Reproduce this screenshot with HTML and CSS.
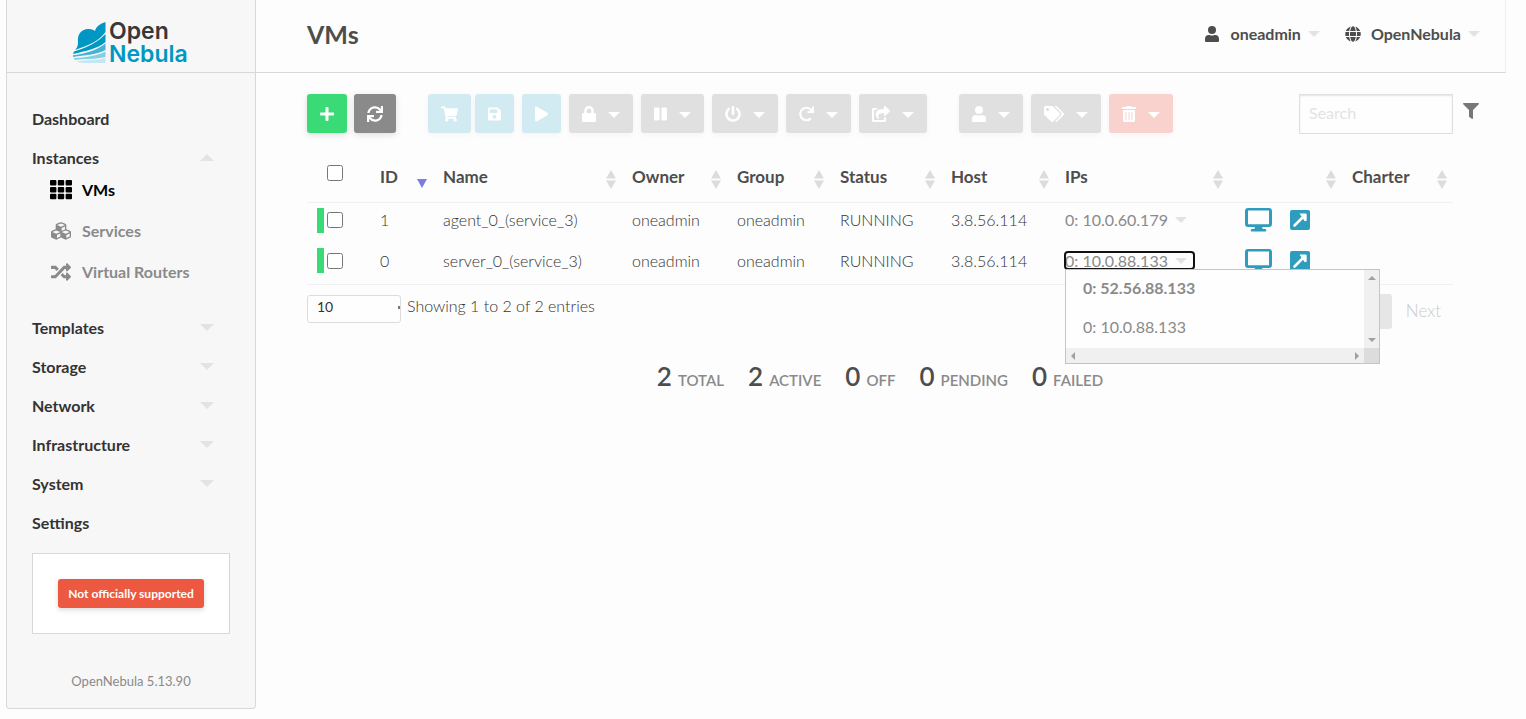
FILE: index.html
```html
<!DOCTYPE html>
<html lang="en">
<head>
<meta charset="utf-8">
<title>OpenNebula - VMs</title>
<link rel="stylesheet" href="styles.css">
</head>
<body>
<svg class="sprite" aria-hidden="true">
  <symbol id="plus" viewBox="0 0 448 512"><path d="M416 208H272V64c0-17.67-14.33-32-32-32h-32c-17.67 0-32 14.33-32 32v144H32c-17.67 0-32 14.33-32 32v32c0 17.67 14.33 32 32 32h144v144c0 17.67 14.33 32 32 32h32c17.67 0 32-14.33 32-32V304h144c17.67 0 32-14.33 32-32v-32c0-17.67-14.33-32-32-32z"/></symbol>
  <symbol id="sync" viewBox="0 0 512 512"><path d="M440.65 12.57l4 82.77A247.16 247.16 0 0 0 255.83 8C134.73 8 33.91 94.92 12.29 209.82A12 12 0 0 0 24.09 224h49.05a12 12 0 0 0 11.67-9.26 175.91 175.91 0 0 1 317-56.94l-101.46-4.86a12 12 0 0 0-12.57 12v47.41a12 12 0 0 0 12 12H500a12 12 0 0 0 12-12V12a12 12 0 0 0-12-12h-47.37a12 12 0 0 0-11.98 12.57zM255.83 432a175.61 175.61 0 0 1-146-77.8l101.8 4.87a12 12 0 0 0 12.57-12v-47.4a12 12 0 0 0-12-12H12a12 12 0 0 0-12 12V500a12 12 0 0 0 12 12h47.35a12 12 0 0 0 12-12.6l-4.15-82.57A247.17 247.17 0 0 0 255.83 504c121.11 0 221.93-86.92 243.55-201.82a12 12 0 0 0-11.8-14.18h-49.05a12 12 0 0 0-11.67 9.26A175.86 175.86 0 0 1 255.83 432z"/></symbol>
  <symbol id="cart" viewBox="0 0 576 512"><path d="M528.12 301.319l47.273-208C578.806 78.301 567.391 64 551.99 64H159.208l-9.166-44.81C147.758 8.021 137.93 0 126.529 0H24C10.745 0 0 10.745 0 24v16c0 13.255 10.745 24 24 24h69.883l70.248 343.435C147.325 417.1 136 435.222 136 456c0 30.928 25.072 56 56 56s56-25.072 56-56c0-15.674-6.447-29.835-16.824-40h209.647C430.447 426.165 424 440.326 424 456c0 30.928 25.072 56 56 56s56-25.072 56-56c0-22.172-12.888-41.332-31.579-50.405l5.517-24.276c3.413-15.018-8.002-29.319-23.403-29.319H218.117l-6.545-32h293.145c11.206 0 20.92-7.754 23.403-18.681z"/></symbol>
  <symbol id="save" viewBox="0 0 448 512"><path d="M433.941 129.941l-83.882-83.882A48 48 0 0 0 316.118 32H48C21.49 32 0 53.49 0 80v352c0 26.51 21.49 48 48 48h352c26.51 0 48-21.49 48-48V163.882a48 48 0 0 0-14.059-33.941zM224 416c-35.346 0-64-28.654-64-64 0-35.346 28.654-64 64-64s64 28.654 64 64c0 35.346-28.654 64-64 64zm96-304.52V212c0 6.627-5.373 12-12 12H76c-6.627 0-12-5.373-12-12V108c0-6.627 5.373-12 12-12h228.52c3.183 0 6.235 1.264 8.485 3.515l3.48 3.48A11.996 11.996 0 0 1 320 111.48z"/></symbol>
  <symbol id="play" viewBox="0 0 448 512"><path d="M424.4 214.7L72.4 6.6C43.8-10.3 0 6.1 0 47.9V464c0 37.5 40.7 60.1 72.4 41.3l352-208c31.4-18.5 31.5-64.1 0-82.6z"/></symbol>
  <symbol id="lock" viewBox="0 0 448 512"><path d="M400 224h-24v-72C376 68.2 307.8 0 224 0S72 68.2 72 152v72H48c-26.5 0-48 21.5-48 48v192c0 26.5 21.5 48 48 48h352c26.5 0 48-21.5 48-48V272c0-26.5-21.5-48-48-48zm-104 0H152v-72c0-39.7 32.3-72 72-72s72 32.3 72 72v72z"/></symbol>
  <symbol id="pause" viewBox="0 0 448 512"><path d="M144 479H48c-26.5 0-48-21.5-48-48V79c0-26.5 21.5-48 48-48h96c26.5 0 48 21.5 48 48v352c0 26.5-21.5 48-48 48zm304-48V79c0-26.5-21.5-48-48-48h-96c-26.5 0-48 21.5-48 48v352c0 26.5 21.5 48 48 48h96c26.5 0 48-21.5 48-48z"/></symbol>
  <symbol id="power" viewBox="0 0 512 512"><path d="M400 54.1c63 45 104 118.6 104 201.9 0 136.8-110.8 247.7-247.5 248C120 504.3 8.2 393 8 256.4 7.9 173.1 48.9 99.3 111.8 54.2c11.7-8.3 28-4.8 35 7.7L162.6 90c5.9 10.5 3.1 23.8-6.6 31-41.5 30.8-68 79.6-68 134.9-.1 92.3 74.5 168.1 168 168.1 91.6 0 168.6-74.2 168-169.1-.3-51.8-24.7-101.8-68.1-134-9.7-7.2-12.4-20.5-6.5-30.9l15.8-28.1c7-12.4 23.2-16.1 34.8-7.8zM296 264V24c0-13.3-10.7-24-24-24h-32c-13.3 0-24 10.7-24 24v240c0 13.3 10.7 24 24 24h32c13.3 0 24-10.7 24-24z"/></symbol>
  <symbol id="redo" viewBox="0 0 512 512"><path d="M500.33 0h-47.41a12 12 0 0 0-12 12.57l4 82.76A247.42 247.42 0 0 0 256 8C119.34 8 7.9 119.53 8 256.19 8.1 393.07 119.1 504 256 504a247.1 247.1 0 0 0 166.18-63.91 12 12 0 0 0 .48-17.43l-34-34a12 12 0 0 0-16.38-.55A176 176 0 1 1 402.1 157.8l-101.53-4.87a12 12 0 0 0-12.57 12v47.41a12 12 0 0 0 12 12h200.33a12 12 0 0 0 12-12V12a12 12 0 0 0-12-12z"/></symbol>
  <symbol id="share" viewBox="0 0 576 512"><path d="M568.482 177.448L424.479 313.433C409.3 327.768 384 317.14 384 295.985v-71.963c-144.575.97-205.566 35.113-164.775 171.353 4.483 14.973-12.846 26.567-25.006 17.33C155.252 383.105 120 326.488 120 269.339c0-143.937 117.599-172.5 264-173.312V24.012c0-21.174 25.317-31.768 40.479-17.448l144.003 135.988c10.02 9.463 10.028 25.425 0 34.896zM384 379.128V448H64V128h50.916a11.99 11.99 0 0 0 8.648-3.693c14.953-15.568 32.237-27.89 51.014-37.676C185.708 80.83 181.584 64 169.033 64H48C21.49 64 0 85.49 0 112v352c0 26.51 21.49 48 48 48h352c26.51 0 48-21.49 48-48v-88.806c0-8.288-8.197-14.066-16.011-11.302a71.83 71.83 0 0 1-34.189 3.377c-7.27-1.046-13.8 4.514-13.8 11.859z"/></symbol>
  <symbol id="user" viewBox="0 0 448 512"><circle cx="224" cy="128" r="128"/><path d="M0 408c0-66 50-118 112-118 35 0 65 16 112 16s77-16 112-16c62 0 112 52 112 118v64c0 22-18 40-40 40H40c-22 0-40-18-40-40z"/></symbol>
  <symbol id="tags" viewBox="0 0 640 512"><path d="M497.941 225.941L286.059 14.059A48 48 0 0 0 252.118 0H48C21.49 0 0 21.49 0 48v204.118a48 48 0 0 0 14.059 33.941l211.882 211.882c18.744 18.745 49.136 18.746 67.882 0l204.118-204.118c18.745-18.745 18.745-49.137 0-67.882zM112 160c-26.51 0-48-21.49-48-48s21.49-48 48-48 48 21.49 48 48-21.49 48-48 48zm513.941 133.823L421.823 497.941c-18.745 18.745-49.137 18.745-67.882 0l-.36-.36L527.64 323.522c16.999-16.999 26.36-39.6 26.36-63.64s-9.362-46.641-26.36-63.64L331.397 0h48.721a48 48 0 0 1 33.941 14.059l211.882 211.882c18.745 18.745 18.745 49.137 0 67.882z"/></symbol>
  <symbol id="trash" viewBox="0 0 448 512"><path d="M32 464a48 48 0 0 0 48 48h288a48 48 0 0 0 48-48V128H32zm272-256a16 16 0 0 1 32 0v224a16 16 0 0 1-32 0zm-96 0a16 16 0 0 1 32 0v224a16 16 0 0 1-32 0zm-96 0a16 16 0 0 1 32 0v224a16 16 0 0 1-32 0zM432 32H312l-9.4-18.7A24 24 0 0 0 281.1 0H166.8a23.72 23.72 0 0 0-21.4 13.3L136 32H16A16 16 0 0 0 0 48v32a16 16 0 0 0 16 16h416a16 16 0 0 0 16-16V48a16 16 0 0 0-16-16z"/></symbol>
  <symbol id="filter" viewBox="0 0 512 512"><path d="M487.976 0H24.028C2.71 0-8.047 25.866 7.058 40.971L192 225.941V432c0 7.831 3.821 15.17 10.237 19.662l80 55.98C298.02 518.69 320 507.493 320 487.98V225.941l184.947-184.97C520.021 25.896 509.338 0 487.976 0z"/></symbol>
  <symbol id="globe" viewBox="0 0 496 512"><path d="M336.5 160C322 70.7 287.8 8 248 8s-74 62.7-88.5 152h177zM152 256c0 22.2 1.2 43.5 3.3 64h185.3c2.1-20.5 3.3-41.8 3.3-64s-1.2-43.5-3.3-64H155.3c-2.1 20.5-3.3 41.8-3.3 64zm324.7-96c-28.6-67.9-86.5-120.4-158-141.6 24.4 33.8 41.2 84.7 50 141.6h108zM177.2 18.4C105.8 39.6 47.8 92.1 19.3 160h108c8.7-56.9 25.5-107.8 49.9-141.6zM487.4 192H372.7c2.1 21 3.3 42.5 3.3 64s-1.2 43-3.3 64h114.6c5.5-20.5 8.6-41.8 8.6-64s-3.1-43.5-8.5-64zM120 256c0-21.5 1.2-43 3.3-64H8.6C3.2 212.5 0 233.8 0 256s3.2 43.5 8.6 64h114.6c-2-21-3.2-42.5-3.2-64zm39.5 96c14.5 89.3 48.7 152 88.5 152s74-62.7 88.5-152h-177zm159.3 141.6c71.4-21.2 129.4-73.7 158-141.6h-108c-8.8 56.9-25.6 107.8-50 141.6zM19.3 352c28.6 67.9 86.5 120.4 158 141.6-24.4-33.8-41.2-84.7-50-141.6h-108z"/></symbol>
  <symbol id="grid" viewBox="0 0 22 20"><rect width="6.400" height="5.500" rx="1"/><rect x="7.800" width="6.400" height="5.500" rx="1"/><rect x="15.600" width="6.400" height="5.500" rx="1"/><rect y="6.900" width="6.400" height="5.500" rx="1"/><rect x="7.800" y="6.900" width="6.400" height="5.500" rx="1"/><rect x="15.600" y="6.900" width="6.400" height="5.500" rx="1"/><rect y="13.800" width="6.400" height="5.500" rx="1"/><rect x="7.800" y="13.800" width="6.400" height="5.500" rx="1"/><rect x="15.600" y="13.800" width="6.400" height="5.500" rx="1"/></symbol>
  <symbol id="cubes" viewBox="0 0 512 512"><path d="M488.600 250.200L392 214V105.500c0-15-9.300-28.400-23.400-33.700l-100-37.500c-8.100-3.100-17.100-3.100-25.300 0l-100 37.500c-14.100 5.300-23.400 18.700-23.400 33.700V214l-96.600 36.200C9.300 255.500 0 268.900 0 283.900V394c0 13.600 7.700 26.100 19.900 32.200l100 50c10.100 5.100 22.100 5.100 32.200 0l103.900-52 103.900 52c10.100 5.100 22.100 5.100 32.200 0l100-50c12.200-6.100 19.900-18.600 19.900-32.200V283.900c0-15-9.300-28.400-23.400-33.700zM358 214.800l-85 31.900v-68.200l85-37v73.300zM154 104.100l102-38.200 102 38.200v.6l-102 41.400-102-41.400v-.6zm84 291.100l-85 42.500v-79.100l85-38.800v75.400zm0-112l-102 41.400-102-41.400v-.6l102-38.200 102 38.200v.6zm240 112l-85 42.500v-79.100l85-38.800v75.400zm0-112l-102 41.400-102-41.400v-.6l102-38.200 102 38.200v.6z"/></symbol>
  <symbol id="random" viewBox="0 0 512 512"><path d="M504.971 359.029c9.373 9.373 9.373 24.569 0 33.941l-80 79.984c-15.010 15.010-40.971 4.490-40.971-16.971V416h-58.785a12.004 12.004 0 0 1-8.773-3.812l-70.556-75.596 53.333-57.143L352 336h32v-39.981c0-21.438 25.943-31.998 40.971-16.971l80 79.981zM12 176h84l52.781 56.551 53.333-57.143-70.556-75.596A11.999 11.999 0 0 0 122.785 96H12c-6.627 0-12 5.373-12 12v56c0 6.627 5.373 12 12 12zm372 0v39.984c0 21.460 25.961 31.980 40.971 16.971l80-79.984c9.373-9.373 9.373-24.569 0-33.941l-80-79.981C409.943 24.021 384 34.582 384 56.019V96h-58.785a12.004 12.004 0 0 0-8.773 3.812L96 336H12c-6.627 0-12 5.373-12 12v56c0 6.627 5.373 12 12 12h110.785c3.326 0 6.503-1.381 8.773-3.812L352 176h32z"/></symbol>
  <symbol id="monitor" viewBox="0 0 27 24"><path fill-rule="evenodd" d="M3 0h21a3 3 0 0 1 3 3v13a3 3 0 0 1-3 3h-7l.8 2H20a1.300 1.300 0 0 1 0 2.600H7A1.300 1.300 0 0 1 7 21h2.300l.7-2H3a3 3 0 0 1-3-3V3a3 3 0 0 1 3-3zm0 2.600v13.600h21V2.600z"/></symbol>
  <symbol id="external" viewBox="0 0 20 20"><rect width="20" height="20" rx="2"/><path d="M4.500 15.500L13 7" stroke="#fff" stroke-width="2.600" stroke-linecap="round"/><path fill="#fff" d="M9.500 3.500h6.200a1 1 0 0 1 1 1v6.200l-2 .6z"/></symbol>
  <symbol id="sort" viewBox="0 0 10 19"><path d="M5 0l5 8.500H0zM5 19L0 10.500h10z"/></symbol>
</svg>

<div class="app">
  <aside class="sidebar">
    <a class="logo" href="#" aria-label="OpenNebula home">
      <svg class="logo-mark" viewBox="0 0 33 41">
        <path fill="#0098c3" d="M32.500 0v10C27 18 17 23 2 28c2-2 3-4 3-8C4 12 9 7 15 7c3 0 5 .5 7 2 1-4 5-7.500 10.500-9z"/>
        <path fill="#0098c3" d="M32.500 12v8C24 27 13 29 0 32l1-2.500C16 25 25 20 32.500 12z"/>
        <path fill="#45b2d6" d="M32.500 21.500V28C22 33 12 33 0 35v-1.700c15-2.300 24-5.300 32.500-11.800z"/>
        <path fill="#85cfe6" d="M32.500 29.500V35C22 37.500 12 36.500 2 38L.5 36.300C13 35 22 34.500 32.500 29.500z"/>
        <path fill="#c3e8f4" d="M32.500 36v5H11c-3 0-6-.5-7.500-1.700C13 38 23 38.500 32.500 36z"/>
      </svg>
      <span class="logo-text"><span class="logo-open">Open</span><span class="logo-nebula">Nebula</span></span>
    </a>
    <nav class="nav">
      <a class="nav-item" href="#">Dashboard</a>
      <a class="nav-item" href="#">Instances<span class="caret caret-up"></span></a>
      <div class="subnav">
        <a class="sub-item active" href="#"><svg class="sub-icon"><use href="#grid"/></svg>VMs</a>
        <a class="sub-item" href="#"><svg class="sub-icon"><use href="#cubes"/></svg>Services</a>
        <a class="sub-item" href="#"><svg class="sub-icon"><use href="#random"/></svg>Virtual Routers</a>
      </div>
      <a class="nav-item" href="#">Templates<span class="caret"></span></a>
      <a class="nav-item" href="#">Storage<span class="caret"></span></a>
      <a class="nav-item" href="#">Network<span class="caret"></span></a>
      <a class="nav-item" href="#">Infrastructure<span class="caret"></span></a>
      <a class="nav-item" href="#">System<span class="caret"></span></a>
      <a class="nav-item" href="#">Settings</a>
    </nav>
    <div class="support"><button class="support-btn" type="button">Not officially supported</button></div>
    <a class="version" href="#">OpenNebula 5.13.90</a>
  </aside>

  <div class="page">
    <header class="topbar">
      <h1 class="title">VMs</h1>
      <div class="menus">
        <button class="menu" type="button"><svg class="menu-icon"><use href="#user"/></svg>oneadmin<span class="caret caret-small"></span></button>
        <button class="menu" type="button"><svg class="menu-icon"><use href="#globe"/></svg>OpenNebula<span class="caret caret-small"></span></button>
      </div>
    </header>

    <main class="content">
      <div class="toolbar">
        <div class="group group-main">
          <button class="btn green" type="button" aria-label="Create"><svg class="w14"><use href="#plus"/></svg></button>
          <button class="btn dark" type="button" aria-label="Refresh"><svg class="w16"><use href="#sync"/></svg></button>
        </div>
        <div class="group group-market">
          <button class="btn blue" type="button" aria-label="Market"><svg class="w17"><use href="#cart"/></svg></button>
          <button class="btn blue" type="button" aria-label="Save"><svg class="w13"><use href="#save"/></svg></button>
        </div>
        <div class="group">
          <button class="btn blue" type="button" aria-label="Play"><svg class="w13"><use href="#play"/></svg></button>
          <button class="btn gray" type="button" aria-label="Lock"><svg class="w14"><use href="#lock"/></svg><span class="arrow"></span></button>
          <button class="btn gray" type="button" aria-label="Pause"><svg class="w13"><use href="#pause"/></svg><span class="arrow"></span></button>
          <button class="btn gray" type="button" aria-label="Power off"><svg class="w16"><use href="#power"/></svg><span class="arrow"></span></button>
          <button class="btn gray" type="button" aria-label="Reboot"><svg class="w15"><use href="#redo"/></svg><span class="arrow"></span></button>
          <button class="btn gray" type="button" aria-label="Migrate"><svg class="w18"><use href="#share"/></svg><span class="arrow"></span></button>
        </div>
        <div class="group group-last">
          <button class="btn gray" type="button" aria-label="Ownership"><svg class="w14"><use href="#user"/></svg><span class="arrow"></span></button>
          <button class="btn gray" type="button" aria-label="Labels"><svg class="w20"><use href="#tags"/></svg><span class="arrow"></span></button>
          <button class="btn red" type="button" aria-label="Terminate"><svg class="w14"><use href="#trash"/></svg><span class="arrow"></span></button>
        </div>
        <input class="search" type="search" placeholder="Search" aria-label="Search">
        <button class="filter" type="button" aria-label="Filter"><svg class="w16"><use href="#filter"/></svg></button>
      </div>

      <div class="listing">
        <table class="vms">
          <colgroup><col class="c-check"><col class="c-id"><col class="c-name"><col class="c-owner"><col class="c-group"><col class="c-status"><col class="c-host"><col class="c-ips"><col class="c-links"><col class="c-charter"></colgroup>
          <thead>
            <tr>
              <th><div class="th-check"><input type="checkbox" aria-label="Select all"></div></th>
              <th><div class="th"><span>ID</span><span class="sorted"></span></div></th>
              <th><div class="th"><span>Name</span><svg class="sort"><use href="#sort"/></svg></div></th>
              <th><div class="th"><span>Owner</span><svg class="sort"><use href="#sort"/></svg></div></th>
              <th><div class="th"><span>Group</span><svg class="sort"><use href="#sort"/></svg></div></th>
              <th><div class="th"><span>Status</span><svg class="sort"><use href="#sort"/></svg></div></th>
              <th><div class="th"><span>Host</span><svg class="sort"><use href="#sort"/></svg></div></th>
              <th><div class="th"><span>IPs</span><svg class="sort"><use href="#sort"/></svg></div></th>
              <th><div class="th"><span></span><svg class="sort"><use href="#sort"/></svg></div></th>
              <th><div class="th"><span>Charter</span><svg class="sort"><use href="#sort"/></svg></div></th>
            </tr>
          </thead>
          <tbody>
            <tr>
              <td><div class="mark"><input type="checkbox" aria-label="Select VM 1"></div></td>
              <td>1</td><td>agent_0_(service_3)</td><td>oneadmin</td><td>oneadmin</td><td>RUNNING</td><td>3.8.56.114</td>
              <td><button class="ip" type="button">0: 10.0.60.179<span class="caret caret-small"></span></button></td>
              <td><div class="links"><a href="#" aria-label="VNC"><svg class="monitor"><use href="#monitor"/></svg></a><a href="#" aria-label="Open"><svg class="external"><use href="#external"/></svg></a></div></td>
              <td></td>
            </tr>
            <tr>
              <td><div class="mark"><input type="checkbox" aria-label="Select VM 0"></div></td>
              <td>0</td><td>server_0_(service_3)</td><td>oneadmin</td><td>oneadmin</td><td>RUNNING</td><td>3.8.56.114</td>
              <td>
                <div class="ip-wrap">
                  <button class="ip focused" type="button">0: 10.0.88.133<span class="caret caret-small"></span></button>
                  <div class="dropdown">
                    <ul class="ip-list"><li class="strong">0: 52.56.88.133</li><li>0: 10.0.88.133</li></ul>
                    <div class="bar-v"><span class="tip up"></span><span class="tip down"></span></div>
                    <div class="bar-h"><span class="tip left"></span><span class="tip right"></span></div>
                    <div class="corner"></div>
                  </div>
                </div>
              </td>
              <td><div class="links"><a href="#" aria-label="VNC"><svg class="monitor"><use href="#monitor"/></svg></a><a href="#" aria-label="Open"><svg class="external"><use href="#external"/></svg></a></div></td>
              <td></td>
            </tr>
          </tbody>
        </table>

        <div class="table-foot">
          <select class="length" aria-label="Entries per page"><option>10</option></select>
          <span class="info">Showing 1 to 2 of 2 entries</span>
          <div class="pager"><button class="current" type="button" aria-label="Page 1"></button><button class="next" type="button">Next</button></div>
        </div>

        <div class="totals">
          <div class="total"><b>2</b><span>TOTAL</span></div>
          <div class="total"><b>2</b><span>ACTIVE</span></div>
          <div class="total"><b>0</b><span>OFF</span></div>
          <div class="total"><b>0</b><span>PENDING</span></div>
          <div class="total"><b>0</b><span>FAILED</span></div>
        </div>
      </div>
    </main>
  </div>
</div>
</body>
</html>
```

FILE: styles.css
```css
* { box-sizing: border-box; }
body { margin: 0; background: #fdfdfd; color: #4d4d4d; font: 16px/24px Lato, "Open Sans", sans-serif; }
a { color: inherit; text-decoration: none; }
button { border: 0; padding: 0; background: none; color: inherit; font: inherit; }
svg { display: block; fill: currentColor; }
.sprite { display: none; }

.app { display: grid; grid-template-columns: 250px 1fr; align-items: start; padding: 0 20px 0 6px; }

.sidebar { background: #f7f7f7; border: 1px solid #d8d8d8; border-top: 0; border-radius: 0 0 4px 4px; padding-bottom: 15px; }
.logo { display: flex; align-items: flex-start; gap: 3px; height: 73px; padding: 22px 0 0 66px; border-bottom: 1px solid #d8d8d8; }
.logo-mark { width: 33px; height: 41px; }
.logo-text { display: flex; flex-direction: column; margin-top: -2px; font: 600 23px/23px Inter, "Open Sans", sans-serif; }
.logo-open { color: #383838; }
.logo-nebula { color: #0098c3; }

.nav { display: flex; flex-direction: column; padding: 26px 41px 0 25px; font-weight: 700; color: #333; }
.nav-item { display: flex; align-items: center; justify-content: space-between; height: 39px; }
.subnav { display: flex; flex-direction: column; padding: 0 0 16px 18px; color: #8a8a8a; margin-top: -8px; }
.sub-item { display: flex; align-items: center; gap: 10px; height: 41px; }
.sub-item.active { color: #000; }
.sub-icon { width: 22px; height: 20px; }
.caret { width: 0; height: 0; border: 7px solid transparent; border-top-color: #e3e3e3; border-bottom: 0; }
.caret-up { border-bottom: 7px solid #e3e3e3; border-top: 0; }
.caret-small { border-width: 6px 6px 0; }

.support { display: flex; justify-content: center; margin: 11px 25px 0; padding: 25px 0; background: #fff; border: 1px solid #d8d8d8; }
.support-btn { height: 29px; padding: 0 10px; border-radius: 3px; background: #ec5840; color: #fff; font-size: 12px; font-weight: 700; box-shadow: 0 2px 5px rgba(0,0,0,.15); }
.version { display: block; margin-top: 35px; text-align: center; font-size: 13px; color: #8a8a8a; }

.topbar { display: flex; align-items: center; justify-content: space-between; height: 73px; padding: 0 25px 4px 51px; border-bottom: 1px solid #d8d8d8; border-right: 1px solid #eee; }
.title { margin: 0; font-size: 25px; line-height: 32px; font-weight: 700; }
.menus { display: flex; gap: 25px; font-weight: 700; }
.menu { display: flex; align-items: center; }
.menu-icon { width: 16px; height: 16px; margin-right: 10px; }
.menu .caret { margin-left: 7px; }

.content { padding: 21px 27px 0 51px; }
.toolbar { display: flex; }
.group { display: flex; gap: 8px; }
.group-main { gap: 7px; margin-right: 32px; }
.group-market { gap: 4px; margin-right: 8px; }
.group-last { margin-left: 32px; }
.btn { display: flex; align-items: center; gap: 12px; height: 39px; padding: 0 13px; border-radius: 3px; color: #fff; box-shadow: 0 2px 6px rgba(0,0,0,.12); }
.btn svg, .filter svg { height: 16px; }
.w13 { width: 13px; } .w14 { width: 14px; } .w15 { width: 15px; } .w16 { width: 16px; }
.w17 { width: 17px; } .w18 { width: 18px; } .w20 { width: 20px; }
.green { background: #3adb76; }
.dark { background: #8a8a8a; }
.blue { background: #d2ebf3; }
.gray { background: #e0e0e0; }
.red { background: #f9d2cd; }
.blue, .gray, .red { box-shadow: 0 2px 6px rgba(0,0,0,.04); }
.arrow { border: 6px solid transparent; border-top-color: #fff; border-bottom: 0; margin-top: 2px; }
.search { width: 154px; height: 40px; margin-left: auto; padding: 0 9px 4px; border: 1px solid #e0e0e0; background: #fefefe; box-shadow: inset 0 1px 2px rgba(0,0,0,.1); font: inherit; }
.search::placeholder { color: #e3e3e3; }
.filter { width: 16px; height: 34px; margin-left: 10px; color: #777; }

.listing { margin-right: 26px; }
.vms { width: 100%; margin-top: 17px; table-layout: fixed; border-collapse: collapse; border-bottom: 1px solid #f0f0f0; }
.c-check, .c-id { width: 63px; }
.c-name { width: 189px; }
.c-owner { width: 105px; }
.c-group { width: 103px; }
.c-status, .c-charter { width: 111px; }
.c-host { width: 114px; }
.c-ips { width: 174px; }
.c-links { width: 113px; }
.vms th { height: 51px; padding: 1px 6px 0 10px; border-bottom: 1px solid #f0f0f0; text-align: left; font-size: 17px; font-weight: 700; }
.vms td { height: 41px; padding: 0 0 5px 10px; font-weight: 300; color: #333; }
.th { display: flex; align-items: center; justify-content: space-between; }
.sort { width: 10px; height: 19px; margin-top: 5px; color: #dcdcdc; }
.sorted { border: 5px solid transparent; border-top: 9px solid #7a7edf; border-bottom: 0; margin-top: 14px; }
.vms input { display: block; width: 16px; height: 16px; margin: 0; }
.th-check { padding: 0 0 8px 10px; }
.mark { display: flex; align-items: center; height: 25px; padding-left: 3px; border-left: 7px solid #3adb76; }
.ip { display: flex; align-items: center; gap: 7px; height: 17px; border-radius: 3px; color: #8a8a8a; font-weight: 400; white-space: nowrap; }
.ip.focused { padding-right: 7px; outline: 2px solid #111; outline-offset: -1px; }
.ip-wrap { position: relative; width: max-content; }
.links { display: flex; align-items: center; gap: 18px; padding-left: 6px; color: #2e9cbc; }
.monitor { width: 27px; height: 24px; }
.external { width: 20px; height: 20px; }

.dropdown { position: absolute; left: 0; top: 17px; z-index: 2; display: grid; grid-template: 78px 15px / 298px 15px; background: #fefefe; border: 1px solid #c4c4c4; color: #8a8a8a; }
.ip-list { margin: -2px 0 0; padding: 0 0 0 17px; list-style: none; font-weight: 400; }
.ip-list li { line-height: 39px; }
.ip-list .strong { font-weight: 700; }
.bar-v, .bar-h { display: flex; align-items: center; justify-content: space-between; background: #f0f0f0; }
.bar-v { flex-direction: column; padding: 6px 0; }
.bar-h { padding: 0 5px; }
.corner { background: #dcdcdc; }
.tip { border: 4px solid transparent; }
.up { border-bottom-color: #a0a0a0; border-top: 0; }
.down { border-top-color: #a0a0a0; border-bottom: 0; }
.left { border-right-color: #a0a0a0; border-left: 0; }
.right { border-left-color: #a0a0a0; border-right: 0; }

.table-foot { display: flex; align-items: flex-start; padding-top: 9px; }
.length { width: 94px; height: 28px; margin: 1px 6px 0 0; padding: 0 9px 3px; border: 1px solid #dcdcdc; border-radius: 3px; appearance: none; background: linear-gradient(#777, #777) right 0 top 10px / 2px 3px no-repeat #fefefe; color: #333; font: 14px/22px Lato, sans-serif; }
.info { font-weight: 300; color: #333; }
.pager { display: flex; align-items: center; margin-left: auto; padding-right: 12px; }
.current { width: 34px; height: 35px; margin-right: 14px; border-radius: 3px; background: #e6e6e6; }
.next { font-size: 17px; font-weight: 300; color: #cacaca; }

.totals { display: flex; justify-content: center; gap: 24px; margin-top: 30px; }
.total { display: flex; align-items: baseline; gap: 6px; line-height: 34px; color: #8a8a8a; font-size: 15px; font-weight: 600; }
.total b { color: #4d4d4d; font-size: 26px; font-weight: 600; }
```
